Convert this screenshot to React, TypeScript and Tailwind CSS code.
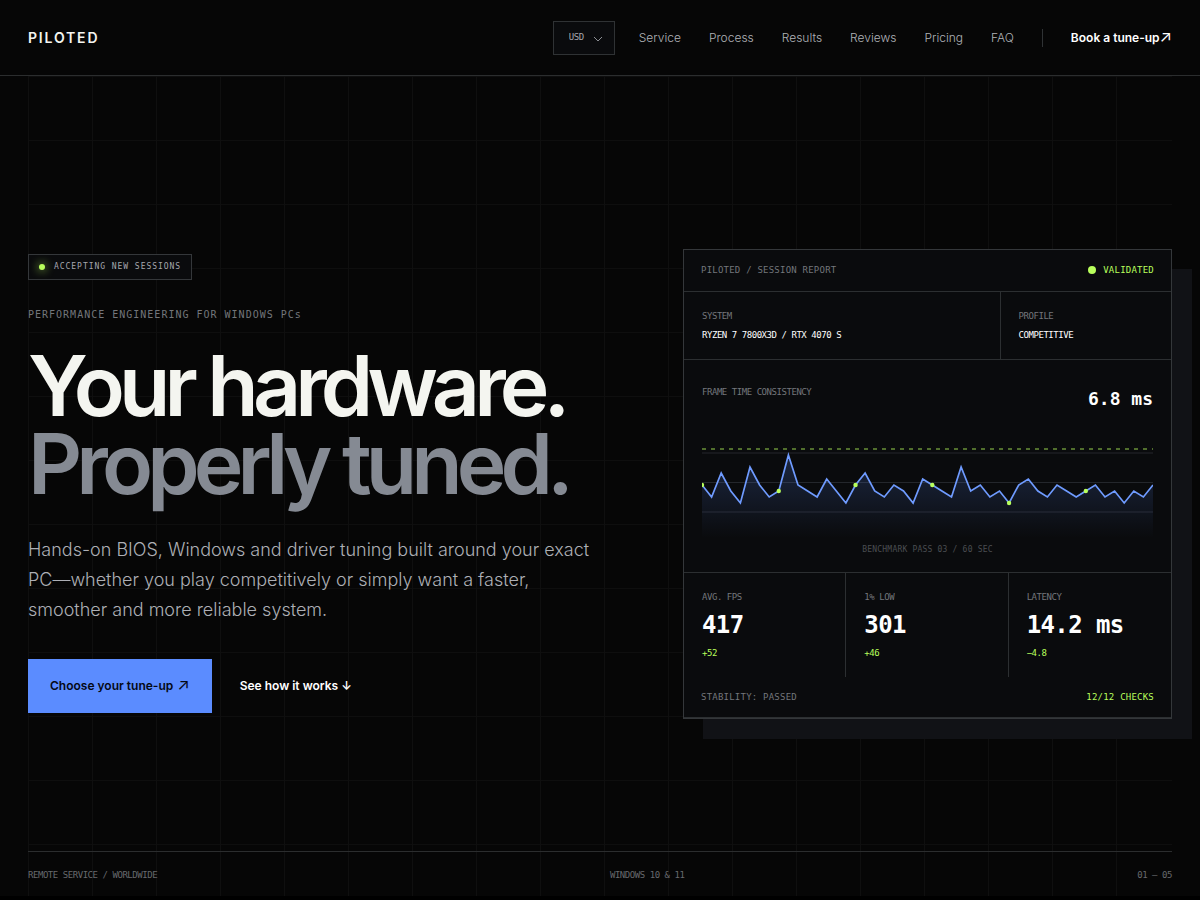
const NAV = ['Service', 'Process', 'Results', 'Reviews', 'Pricing', 'FAQ'];

const METRICS = [
  { label: 'AVG. FPS', value: '417', delta: '+52' },
  { label: '1% LOW', value: '301', delta: '+46' },
  { label: 'LATENCY', value: '14.2 ms', delta: '−4.8' },
];

// Frame time samples, one per column of the chart, as y positions
const FRAMES = [
  65, 77, 53, 71, 83, 47, 65, 77, 71, 35, 65, 71, 77, 59, 71, 83,
  65, 53, 71, 77, 65, 71, 83, 59, 65, 71, 77, 47, 71, 65, 77, 71,
  83, 65, 59, 71, 77, 65, 71, 77, 71, 65, 77, 71, 83, 71, 77, 65,
];

const CHART_W = 451;
const CHART_H = 120;
const STEP = CHART_W / (FRAMES.length - 1);

function FrameChart() {
  const line = FRAMES.map((y, i) => `${i ? 'L' : 'M'}${(i * STEP).toFixed(1)} ${y}`).join(' ');

  return (
    <svg
      viewBox={`0 0 ${CHART_W} ${CHART_H}`}
      className="block w-full"
      role="img"
      aria-label="Frame time over a 60 second benchmark"
    >
      <defs>
        <linearGradient id="frame-fill" x1="0" y1="35" x2="0" y2="118" gradientUnits="userSpaceOnUse">
          <stop offset="0" stopColor="#5b8cff" stopOpacity="0.22" />
          <stop offset="1" stopColor="#5b8cff" stopOpacity="0" />
        </linearGradient>
      </defs>
      <path d="M0 33H451M0 62.5H451M0 92H451" stroke="#24272c" />
      <path d="M0 29H451" stroke="#b8ff5c" strokeOpacity="0.55" strokeWidth="1.5" strokeDasharray="4 5" />
      <path d={`${line} V118 H0 Z`} fill="url(#frame-fill)" />
      <path d={line} fill="none" stroke="#6f9bff" strokeWidth="1.7" />
      {FRAMES.map((y, i) =>
        i % 8 === 0 ? <circle key={i} cx={i * STEP} cy={y} r="2.2" fill="#b8ff5c" /> : null
      )}
    </svg>
  );
}

function SessionReport() {
  return (
    <article className="border border-[#34373a] bg-[#0a0b0d] font-['DejaVu_Sans_Mono',monospace] text-[9px] leading-3 text-[#73767b] shadow-[20px_20px_0_#111216]">
      <header className="flex h-[42px] items-center justify-between border-b border-[#2c2f31] px-[17px] tracking-wide">
        <span>PILOTED / SESSION REPORT</span>
        <span className="flex items-center gap-[7px] text-[#b8ff5c]">
          <i className="size-2 rounded-full bg-[#b8ff5c]" />
          VALIDATED
        </span>
      </header>

      <dl className="grid h-[68px] grid-cols-[13fr_7fr] border-b border-[#2c2f31] tracking-tighter">
        <div className="flex flex-col justify-center gap-[7px] border-r border-[#2c2f31] px-[18px]">
          <dt>SYSTEM</dt>
          <dd className="text-white">RYZEN 7 7800X3D / RTX 4070 S</dd>
        </div>
        <div className="flex flex-col justify-center gap-[7px] px-[18px]">
          <dt>PROFILE</dt>
          <dd className="text-white">COMPETITIVE</dd>
        </div>
      </dl>

      <div className="border-b border-[#2c2f31] px-[18px] pt-[26px] pb-4">
        <div className="flex items-start justify-between tracking-tighter">
          <span>FRAME TIME CONSISTENCY</span>
          <strong className="text-lg leading-[26px] font-bold tracking-normal text-white">6.8 ms</strong>
        </div>
        <div className="mt-2">
          <FrameChart />
        </div>
        <p className="mt-1 text-center text-[8px] tracking-wide text-[#4b4e52]">BENCHMARK PASS 03 / 60 SEC</p>
      </div>

      <dl className="grid grid-cols-3">
        {METRICS.map((m) => (
          <div key={m.label} className="h-[104px] border-r border-[#2c2f31] px-[18px] pt-[18px] last:border-r-0">
            <dt className="tracking-tighter">{m.label}</dt>
            <dd className="mt-1 text-2xl leading-9 font-bold tracking-tight text-white">{m.value}</dd>
            <dd className="mt-1 tracking-tighter text-[#b8ff5c]">{m.delta}</dd>
          </div>
        ))}
      </dl>

      <footer className="flex h-[41px] items-center justify-between border-b border-[#2c2f31] px-[17px] tracking-wide">
        <span>STABILITY: PASSED</span>
        <span className="text-[#b8ff5c]">12/12 CHECKS</span>
      </footer>
    </article>
  );
}

function Header() {
  return (
    <header className="flex h-[76px] items-center justify-between border-b border-[#2b2d2e] px-7">
      <a href="#top" className="text-sm font-semibold tracking-[0.13em] text-[#f4f5f0]">
        PILOTED
      </a>
      <div className="flex items-center gap-6">
        <div className="relative">
          <select
            aria-label="Currency"
            defaultValue="USD"
            className="block h-[34px] w-[62px] appearance-none border border-[#2f3234] bg-[#0a0b0d] pl-[15px] font-['DejaVu_Sans_Mono',monospace] text-[9px] tracking-tighter text-[#a5a7ad]"
          >
            <option>USD</option>
            <option>EUR</option>
            <option>GBP</option>
          </select>
          <svg
            viewBox="0 0 10 6"
            className="pointer-events-none absolute top-[15px] right-3 h-1.5 w-2.5"
            fill="none"
            stroke="#8b8e93"
            aria-hidden
          >
            <path d="M1 1l4 4 4-4" />
          </svg>
        </div>
        <nav className="flex items-center gap-7 text-xs leading-4 font-light text-[#b0b2b7]">
          {NAV.map((item) => (
            <a key={item} href={`#${item.toLowerCase()}`}>
              {item}
            </a>
          ))}
          <a href="#book" className="flex items-center font-semibold text-white">
            <span className="mr-7 h-[18px] w-px bg-[#2f3234]" />
            Book a tune-up
            <span className="pb-1 text-base leading-4 font-normal">↗</span>
          </a>
        </nav>
      </div>
    </header>
  );
}

export default function App() {
  return (
    <div id="top" className="min-h-screen bg-black font-['Inter',sans-serif]">
      <div className="bg-[#060606]">
        <Header />

        <section className="px-7">
          <div className="flex min-h-[calc(100vh-80px)] flex-col bg-[linear-gradient(to_right,#0f0f0f_1px,transparent_1px),linear-gradient(to_bottom,#0e0e0e_1px,transparent_1px)] bg-[size:64px_64px]">
            <div className="grid flex-1 grid-cols-[minmax(0,1fr)_minmax(0,489px)] items-center gap-14 pt-10">
              <div>
                <p className="flex h-[26px] w-fit items-center gap-[9px] border border-[#34373a] bg-[#0a0b0d] px-2.5 font-['DejaVu_Sans_Mono',monospace] text-[8px] tracking-[0.12em] text-[#a5a7ad]">
                  <i className="size-1.5 rounded-full bg-[#b8ff5c] shadow-[0_0_10px_#b8ff5c]" />
                  ACCEPTING NEW SESSIONS
                </p>
                <p className="mt-[27px] font-['DejaVu_Sans_Mono',monospace] text-[10px] leading-4 tracking-widest text-[#73767b]">
                  PERFORMANCE ENGINEERING FOR WINDOWS PCs
                </p>
                <h1 className="mt-6 text-[84px] leading-[78px] font-semibold tracking-[-0.07em] whitespace-nowrap text-[#f4f5f0]">
                  Your hardware.
                  <span className="block text-[#858a93]">Properly tuned.</span>
                </h1>
                <p className="mt-8 max-w-[570px] text-lg leading-[30px] font-light text-[#adafb5]">
                  Hands-on BIOS, Windows and driver tuning built around your exact PC—whether you play
                  competitively or simply want a faster, smoother and more reliable system.
                </p>
                <div className="mt-[34px] flex items-center gap-7 text-xs leading-4 font-semibold">
                  <a href="#pricing" className="flex h-[54px] items-center bg-[#5b8cff] px-[22px] text-[#050914]">
                    Choose your tune-up
                    <span className="ml-1 pb-1 text-base leading-4 font-normal">↗</span>
                  </a>
                  <a href="#process" className="text-white">
                    See how it works ↓
                  </a>
                </div>
              </div>

              <SessionReport />
            </div>

            <div className="flex h-[45px] items-center justify-between border-t border-[#2b2d2e] pt-1 font-['DejaVu_Sans_Mono',monospace] text-[9px] tracking-tighter text-[#66696d]">
              <span>REMOTE SERVICE / WORLDWIDE</span>
              <span>WINDOWS 10 &amp; 11</span>
              <span>01 — 05</span>
            </div>
          </div>
        </section>
      </div>
    </div>
  );
}
